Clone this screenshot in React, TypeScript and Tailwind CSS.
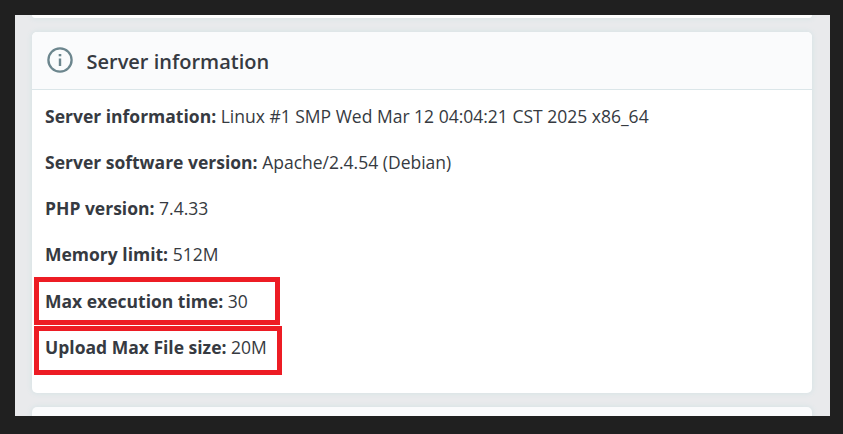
import { FC } from "react";

const rows = [
  { label: "Server information:", value: "Linux #1 SMP Wed Mar 12 04:04:21 CST 2025 x86_64" },
  { label: "Server software version:", value: "Apache/2.4.54 (Debian)" },
  { label: "PHP version:", value: "7.4.33" },
  { label: "Memory limit:", value: "512M" },
  {
    label: "Max execution time:",
    value: "30",
    highlight: "-left-[11px] -top-[12px] w-[246px] h-[48px]",
  },
  {
    label: "Upload Max File size:",
    value: "20M",
    highlight: "-left-[11px] -top-[9px] w-[248px] h-[49px]",
  },
];

const InfoIcon: FC = () => (
  <svg width="26" height="26" viewBox="0 0 26 26" fill="none" className="-mt-[2px] shrink-0">
    <circle cx="13" cy="13" r="11.6" stroke="#6c868e" strokeWidth="2.3" />
    <path d="M13 11.5V19" stroke="#6c868e" strokeWidth="2.4" />
    <path d="M13 7V9.3" stroke="#6c868e" strokeWidth="2.6" />
  </svg>
);

const App: FC = () => {
  return (
    <div className="w-[843px] h-[434px] bg-[#202020] pl-[15px] pr-[13px] pt-[15px] pb-[18px] font-['Open_Sans',sans-serif] text-[#363a41]">
      <div className="h-full overflow-hidden bg-[#e9eaec] pl-[17px] pr-[18px]">
        <div className="h-[3px] rounded-b-[5px] bg-white shadow-[0_0_5px_1px_#d8e4e6]" />
        <div className="mt-[14px] h-[361px] rounded-[5px] bg-white shadow-[0_0_5px_1px_#d8e4e6]">
          <div className="flex h-[58px] items-center rounded-t-[5px] border-b border-[#dbe6e9] bg-[#fafbfc] pl-[15px]">
            <InfoIcon />
            <h3 className="ml-[13.5px] mt-[3px] text-[20px] leading-[28px] font-semibold">
              Server information
            </h3>
          </div>
          <div className="flex flex-col gap-[22.15px] pl-[13px] pt-[14px]">
            {rows.map((row) => (
              <p key={row.label} className="relative text-[17.5px] leading-[24px] whitespace-nowrap">
                <strong className="font-bold">{row.label}</strong> {row.value}
                {row.highlight && (
                  <span className={`absolute border-[5px] border-[#ed1c24] ${row.highlight}`} />
                )}
              </p>
            ))}
          </div>
        </div>
        <div className="mt-[14px] h-[58px] rounded-t-[5px] bg-[#fafbfc] shadow-[0_0_5px_1px_#d8e4e6]" />
      </div>
    </div>
  );
};

export default App;
